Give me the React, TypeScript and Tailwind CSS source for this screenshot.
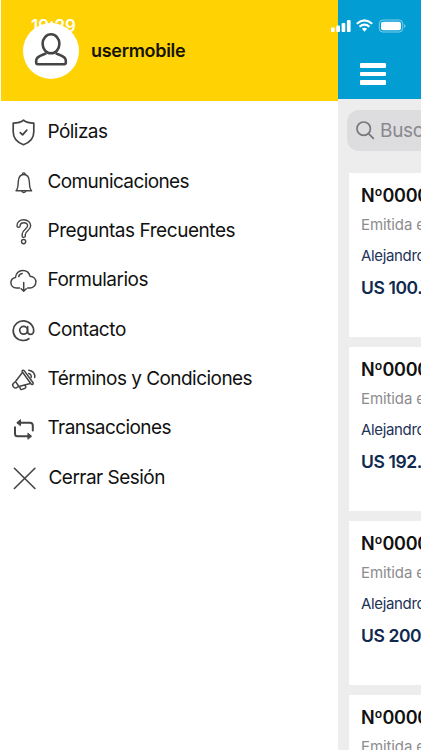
import React from "react";

type IconProps = { children: React.ReactNode; w?: number };

function Icon({ children, w = 1.5 }: IconProps) {
  return (
    <svg
      width="30"
      height="30"
      viewBox="0 0 30 30"
      fill="none"
      stroke="#444"
      strokeWidth={w}
      strokeLinecap="round"
      strokeLinejoin="round"
      className="shrink-0"
    >
      {children}
    </svg>
  );
}

const menu = [
  {
    label: "Pólizas",
    style: "tracking-[-0.56px]",
    icon: (
      <Icon w={1.7}>
        <path d="M15.5 4.2C12.8 6.5 8.8 7.2 5.2 7.2V15.7C5.2 21.8 9.4 26.5 15.5 28.7C21.6 26.5 25.8 21.8 25.8 15.7V7.2C22.2 7.2 18.2 6.5 15.5 4.2Z" />
        <path d="M12.2 16.7L14.6 18.9L18.8 14.1" />
      </Icon>
    ),
  },
  {
    label: "Comunicaciones",
    style: "tracking-[-0.6px]",
    icon: (
      <Icon w={1.4}>
        <path d="M8 24.7C10.2 22.8 10 20.3 10.2 16.1C10.4 11.6 12.4 8.5 15.8 8.5C19.2 8.5 21.2 11.6 21.4 16.1C21.6 20.3 21.4 22.8 23.6 24.7Z" />
        <path d="M14.4 8.4C14.4 6.3 17.2 6.3 17.2 8.4M13.8 25C14.1 26.9 17.5 26.9 17.8 25" />
      </Icon>
    ),
  },
  {
    label: "Preguntas Frecuentes",
    style: "tracking-[-0.45px]",
    icon: (
      <Icon w={1.4}>
        <path d="M9 11C9 7 12 4.8 15.7 4.8C19.8 4.8 22.7 7.4 22.7 10.8C22.7 15.2 17.3 16.1 17.3 19.5V21.2C17.3 22.7 14.2 22.7 14.2 21.2V19C14.2 14.7 19.6 13.9 19.6 10.8C19.6 8.8 18 7.7 15.8 7.7C13.6 7.7 12.1 8.8 12.1 11C12.1 12.7 9 12.7 9 11Z" />
        <circle cx="15.6" cy="26.6" r="2.1" />
      </Icon>
    ),
  },
  {
    label: "Formularios",
    style: "tracking-[-0.5px]",
    icon: (
      <Icon w={1.5}>
        <path d="M11.5 24H8.5C5.2 24 2.9 21.7 2.9 18.8C2.9 16 5 13.9 7.5 13.5C7.6 9.3 10.8 6.5 14.7 6.5C18.4 6.5 21.2 8.8 22 12.2C25.4 12.4 27.9 14.9 27.9 18C27.9 21.3 25.2 24 21.8 24H19.7" />
        <path d="M10.7 12.6C11.1 10.7 12.5 9.7 14.2 9.5M15.7 18.6V27M13.1 24.7L15.7 27.2L18.3 24.7" />
      </Icon>
    ),
  },
  {
    label: "Contacto",
    style: "tracking-[-0.42px]",
    icon: (
      <Icon w={1.7}>
        <path d="M20.9 24.7C16.9 27.6 10.9 27 7.5 23.1C4 19 4.6 12.8 8.6 9.3C12.9 5.6 19.5 6.2 23.2 10.4C25.5 13.1 26.2 16.4 25.2 18.9C24.1 21.2 19.6 21 19.6 17.6V12.5" />
        <circle cx="15.6" cy="16.3" r="3.9" />
      </Icon>
    ),
  },
  {
    label: "Términos y Condiciones",
    style: "tracking-[-0.54px]",
    icon: (
      <Icon w={1.5}>
        <g transform="translate(-0.3 1.6)">
          <path d="M14.7 7.4C13.6 5.8 15.6 4.9 16.7 6.3L25.2 17.9C26.2 19.5 24.3 20.6 23.2 19.2Z" />
          <path d="M14.5 8.2L7.8 16.9L5.8 18.7C3.6 20.5 6.3 24.3 8.9 23.1L11.2 21.9L22.5 19M7.8 16.9L11.2 21.9M12.2 21.8L12.5 24C12.7 24.9 13.5 25.1 14.3 24.8L17.5 23.6C18.6 23 18.2 21.5 16.7 20.6M21 9C23 9.5 24 11.3 23.4 13M21 5.6C25 5.9 27.6 9.2 27 12.9" />
        </g>
      </Icon>
    ),
  },
  {
    label: "Transacciones",
    style: "tracking-[-0.58px]",
    icon: (
      <Icon w={2}>
        <path d="M10 9.7H22Q24.8 9.7 24.8 12.5V17.5M7 14.3V20.7Q7 23.2 9.5 23.2H22" />
        <path d="M12.2 6.9L8.8 9.7L12.2 12.5ZM20.2 20.4L23.6 23.2L20.2 26Z" fill="#444" strokeWidth="1" />
      </Icon>
    ),
  },
  {
    label: "Cerrar Sesión",
    style: "pl-[1px] tracking-[-0.53px]",
    icon: (
      <Icon w={1.6}>
        <path d="M6.4 6.3L26.9 26.5M26.9 6.3L6.4 26.5" />
      </Icon>
    ),
  },
];

const cards = ["US 100.000", "US 192.000", "US 200.000", "US 150.000"];

function Drawer() {
  return (
    <aside className="flex w-[337px] shrink-0 flex-col bg-white">
      <header className="flex h-[101px] items-center bg-[#ffd204] pl-[22px]">
        <div className="z-20 flex size-14 items-center justify-center rounded-full bg-white">
          <svg width="36" height="36" viewBox="0 0 36 36" fill="none" stroke="#454545" strokeWidth="2.6" strokeLinejoin="round">
            <ellipse cx="18" cy="10.8" rx="8.4" ry="9.5" />
            <path d="M13.2 20.2C10.5 22.1 3.2 22.6 3.2 27.4V29.6Q3.2 31.2 4.8 31.2H31.2Q32.8 31.2 32.8 29.6V27.4C32.8 22.6 25.5 22.1 22.8 20.2" />
          </svg>
        </div>
        <span className="ml-3 text-[18px] font-semibold tracking-[-0.3px] text-[#151307]">usermobile</span>
      </header>
      <nav className="pt-[5.5px]">
        {menu.map((m) => (
          <a key={m.label} className="flex h-[49.4px] items-center pl-[7px] text-[19px] text-[#111]">
            {m.icon}
            <span className={"ml-[9.5px] pt-[2.4px] whitespace-nowrap " + m.style}>{m.label}</span>
          </a>
        ))}
      </nav>
    </aside>
  );
}

function Policies() {
  return (
    <main className="flex w-[83px] flex-col overflow-hidden bg-[#ededee]">
      <header className="flex h-[99px] shrink-0 flex-col gap-1 bg-[#029dd3] pt-[63px] pl-[22px]">
        <i className="h-[4.6px] w-[26px] rounded-[1px] bg-white" />
        <i className="h-[4.6px] w-[26px] rounded-[1px] bg-white" />
        <i className="h-[4.6px] w-[26px] rounded-[1px] bg-white" />
      </header>
      <div className="mt-[11px] ml-[9px] flex h-[41px] w-[200px] shrink-0 items-center rounded-xl bg-[#dddde0] pl-[9px] text-[19px] tracking-[-0.3px] text-[#88888d]">
        <svg width="20" height="20" viewBox="0 0 20 20" fill="none" stroke="#77777b" strokeWidth="1.7" strokeLinecap="round">
          <circle cx="7.7" cy="7.7" r="6.7" />
          <path d="M12.6 12.6L17.3 17.3" />
        </svg>
        <span className="ml-1 pt-0.5">Buscar</span>
      </div>
      <div className="mt-[22px] ml-[11px] flex w-[300px] shrink-0 flex-col gap-[10.3px]">
        {cards.map((amount) => (
          <article key={amount} className="h-[163.7px] bg-white pt-[9px] pl-3 whitespace-nowrap">
            <h2 className="text-[18px] leading-[28px] font-semibold tracking-[-0.3px] text-[#111]">Nº000012</h2>
            <p className="text-[15px] leading-[29px] tracking-[-0.1px] text-[#8c8c8e]">Emitida el</p>
            <p className="text-[15px] leading-[33px] tracking-[-0.35px] text-[#1d3358]">Alejandro</p>
            <p className="text-[17.5px] leading-[32px] font-semibold tracking-[-0.4px] text-[#10294f]">{amount}</p>
          </article>
        ))}
      </div>
    </main>
  );
}

function StatusIcons() {
  return (
    <svg className="absolute top-[18px] left-[330px] z-30" width="80" height="16" viewBox="0 0 80 16" fill="none">
      <g fill="#fff">
        <rect x="1" y="9.5" width="3.7" height="4.5" rx="1" />
        <rect x="6.3" y="7.5" width="3.7" height="6.5" rx="1" />
        <rect x="11.6" y="5" width="3.7" height="9" rx="1" />
        <rect x="16.9" y="2" width="3.7" height="12" rx="1" />
        <path d="M31.9 10.8Q34.5 8.8 37.1 10.8L34.5 13.8Z" />
        <rect x="51" y="3.7" width="20" height="8.6" rx="2" />
      </g>
      <path d="M26.8 5.8Q34.5-1 42.2 5.8M29.5 8.7Q34.5 4.4 39.5 8.7" stroke="#fff" strokeWidth="2.1" />
      <rect x="49.3" y="2" width="23.4" height="12" rx="3.5" stroke="#fff" strokeOpacity=".5" />
      <path d="M74.3 6.1Q76.9 8 74.3 9.9Z" fill="#fff" fillOpacity=".6" />
    </svg>
  );
}

export default function App() {
  return (
    <div className="relative flex h-[750px] w-[422px] overflow-hidden bg-white px-px font-['Inter','Liberation_Sans',sans-serif]">
      <time className="absolute top-[16px] left-[31px] z-10 text-[17px] leading-5 font-semibold text-white">19:29</time>
      <Drawer />
      <Policies />
      <StatusIcons />
    </div>
  );
}
